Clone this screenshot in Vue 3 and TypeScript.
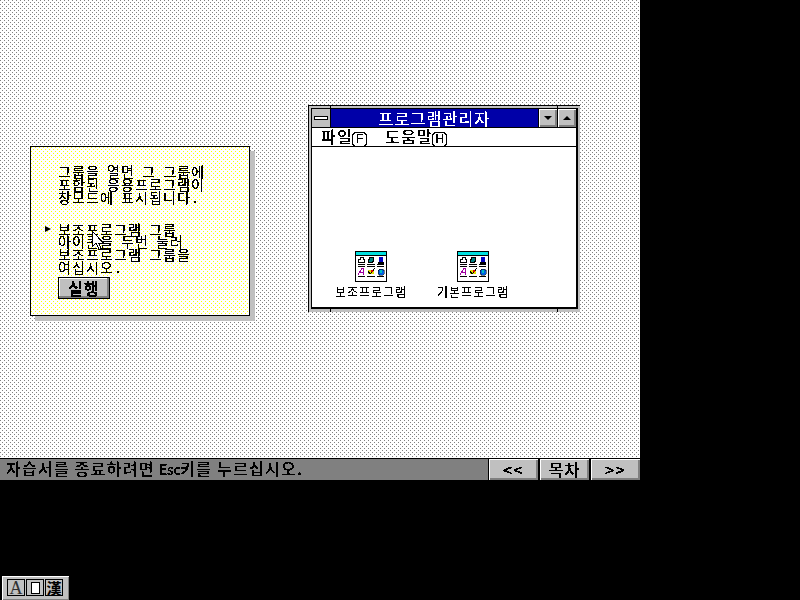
<script setup lang="ts">
const noteTop = ['그룹을 열면 그 그룹에', '포함된 응용프로그램이', '창모드에 표시됩니다 .']
const noteSteps = ['보조프로그램 그룹', '아이콘을 두번 눌러', '보조프로그램 그룹을', '여십시오 .']
const groups = ['보조프로그램', '기본프로그램']
const tickSpots = ['t1', 't2', 'b1', 'b2']

// the closing " ." sits tighter than a normal word gap
const body = (line: string) => line.replace(/ \.$/, '')
const hasDot = (line: string) => line.endsWith(' .')
</script>

<template>
  <div class="screen">
    <svg class="defs" width="0" height="0">
      <filter id="crisp" color-interpolation-filters="sRGB" x="0" y="0" width="100%" height="100%">
        <feComponentTransfer>
          <feFuncA type="discrete" tableValues="0 1 1" />
        </feComponentTransfer>
      </filter>
    </svg>

    <div class="desktop">
      <section class="note">
        <div class="note-text">
          <p v-for="line in noteTop" :key="line" class="txt">{{ body(line) }}<span v-if="hasDot(line)" class="dot"> .</span></p>
          <p class="blank">&nbsp;</p>
          <p v-for="(line, i) in noteSteps" :key="line" class="step">
            <i v-if="i === 0" class="bullet"></i><span class="txt">{{ body(line) }}<span v-if="hasDot(line)" class="dot"> .</span></span>
          </p>
          <button class="run"><span class="txt">실행</span></button>
        </div>
        <svg class="cursor" width="13" height="20" viewBox="0 0 13 20" shape-rendering="crispEdges">
          <path d="M.5.5v15l3.500-3.500 3 6.500h2.500l-3-6.500h5z" fill="#fff" stroke="#000" />
        </svg>
      </section>

      <section class="window">
        <i v-for="t in tickSpots" :key="t" class="tick" :class="t"></i>
        <header class="titlebar">
          <div class="sysmenu"><span></span></div>
          <div class="title"><span class="txt">프로그램관리자</span></div>
          <div class="winbtn"><i class="down"></i></div>
          <div class="winbtn"><i class="up"></i></div>
        </header>
        <nav class="menu">
          <span class="txt">파일<b>F</b></span>
          <span class="txt">도움말<b>H</b></span>
        </nav>
        <div class="client">
          <div v-for="g in groups" :key="g" class="group">
            <svg width="32" height="31" viewBox="0 0 32 31" shape-rendering="crispEdges">
              <rect x=".5" y=".5" width="31" height="30" fill="#fff" stroke="#000" />
              <rect x="1" y="1" width="30" height="3" fill="#00e0e0" />
              <path d="M1 4.500h30" stroke="#000" />
              <!-- top row: three little machines on their bars -->
              <path d="M5.500 6.500h3v2h1v3h-6v-3h2z" fill="#fff" stroke="#000" />
              <path d="M14.500 6.500h4v4h-1v1h-4v-3h1z" fill="#008080" stroke="#000" />
              <rect x="24" y="6" width="4" height="5" fill="#0000c0" />
              <path d="M23 11h6v2h-6z" fill="#000" />
              <path d="M3 13h7v1H3zM3 15h7v1H3zM12 13h8v1h-8zM12 15h8v1h-8zM22 13h7v1h-7zM22 15h7v1h-7z" fill="#000" />
              <!-- bottom row: letter, palette, dial -->
              <path d="M3 24l4-7h1l1 7M5 21h4" fill="none" stroke="#a000a0" />
              <path d="M13 19h6v4h-6z" fill="#e0e000" />
              <path d="M13 20l2 3 5-6" fill="none" stroke="#000" />
              <path d="M16 19h2v2h-2z" fill="#e00000" />
              <path d="M24 18h4v1h1v4h-1v1h-4v-1h-1v-4h1z" fill="#0060e0" stroke="#000" stroke-width=".5" />
              <path d="M25 19h2v3h-2z" fill="#00c0c0" />
              <path d="M3 25h7v1H3zM12 25h8v1h-8zM22 25h7v1h-7z" fill="#000" />
            </svg>
            <span class="txt">{{ g }}</span>
          </div>
        </div>
      </section>
    </div>

    <footer class="status">
      <span class="hint txt">자습서를 종료하려면 <em>Esc</em><span class="tight">키를 누르십시오.</span></span>
      <div class="navs">
        <button><span class="txt">&lt;&lt;</span></button>
        <button><span class="txt">목차</span></button>
        <button><span class="txt">&gt;&gt;</span></button>
      </div>
    </footer>

    <div class="tray">
      <span class="tray-a">A</span>
      <span class="tray-box"><i></i></span>
      <span class="tray-han">漢</span>
    </div>
  </div>
</template>

<style>
html, body { margin: 0; background: #000; }
</style>

<style scoped>
.screen {
  position: relative;
  width: 800px;
  height: 600px;
  background: #000;
  font-family: "Noto Sans CJK KR", "Liberation Sans", sans-serif;
  color: #000;
  overflow: hidden;
}
.defs { position: absolute; }
.txt { display: inline-block; filter: url(#crisp); }
p.txt { display: block; }
.desktop {
  position: relative;
  width: 640px;
  height: 458px;
  background: #fff url("data:image/svg+xml,%3Csvg xmlns='http://www.w3.org/2000/svg' width='4' height='4' shape-rendering='crispEdges'%3E%3Cpath d='M0 0h1v1H0zM2 2h1v1H2z' fill='%23808080'/%3E%3C/svg%3E");
}
p { margin: 0; }

.note {
  position: absolute;
  left: 30px;
  top: 146px;
  width: 220px;
  height: 170px;
  box-sizing: border-box;
  border: 1px solid #000;
  background: #fff url("data:image/svg+xml,%3Csvg xmlns='http://www.w3.org/2000/svg' width='4' height='4' shape-rendering='crispEdges'%3E%3Cpath d='M0 0h1v1H0zM2 2h1v1H2z' fill='%23ffff00'/%3E%3C/svg%3E");
  box-shadow: 5px 5px 0 #c0c0c0;
}
.note-text {
  padding: 18px 0 0 27px;
  font-size: 14px;
  line-height: 12.75px;
  letter-spacing: 1.12px;
  word-spacing: 2.8px;
  white-space: nowrap;
}
.dot { word-spacing: 0; margin-left: -2px; }
.blank { height: 19.25px; }
.step { position: relative; }
.bullet {
  position: absolute;
  left: -13px;
  top: 3px;
  border-left: 6px solid #000;
  border-top: 3px solid transparent;
  border-bottom: 3px solid transparent;
}
.run {
  display: block;
  width: 52px;
  height: 22px;
  margin-top: 3px;
  padding: 0;
  background: #c0c0c0;
  border: 1px solid #000;
  box-shadow: inset -2px -2px 0 #808080, inset 1px 1px 0 #fff;
  font: 700 16px/18px "Noto Sans CJK KR", sans-serif;
  letter-spacing: 1.3px;
  color: #000;
}
.cursor { position: absolute; left: 61px; top: 84px; }

.window {
  position: absolute;
  left: 308px;
  top: 105px;
  width: 272px;
  height: 207px;
  box-sizing: border-box;
  border-left: 1px solid #000;
  border-top: 1px solid #000;
  background: #c0c0c0;
  padding: 2px 2px 3px;
  display: flex;
  flex-direction: column;
}
.tick { position: absolute; width: 1px; height: 3px; background: #000; }
.t1 { left: 21px; top: 0; }
.t2 { left: 248px; top: 0; }
.b1 { left: 21px; bottom: 0; }
.b2 { left: 248px; bottom: 0; }
.titlebar {
  display: flex;
  height: 19px;
  flex: none;
  border-left: 1px solid #000;
  border-top: 1px solid #000;
  border-right: 2px solid #000;
  box-sizing: border-box;
}
.sysmenu {
  width: 18px;
  background: #c0c0c0;
  border-right: 1px solid #000;
  display: flex;
  align-items: center;
  justify-content: center;
}
.sysmenu span {
  width: 12px;
  height: 2px;
  background: #fff;
  border: 1px solid #000;
}
.title {
  flex: 1;
  background: #0000a8;
  color: #fff;
  text-align: center;
  font-size: 16px;
  line-height: 18px;
  letter-spacing: 1.28px;
}
.winbtn {
  width: 18px;
  border-left: 1px solid #000;
  background: #c0c0c0;
  box-shadow: inset 1px 1px 0 #fff, inset -2px -2px 0 #808080;
  display: flex;
  align-items: center;
  justify-content: center;
}
.winbtn i {
  border-left: 4px solid transparent;
  border-right: 4px solid transparent;
}
.winbtn .down { border-top: 4px solid #000; }
.winbtn .up { border-bottom: 4px solid #000; }
.menu {
  flex: none;
  display: flex;
  gap: 18px;
  height: 20px;
  box-sizing: border-box;
  padding-left: 9px;
  background: #fff;
  border-left: 1px solid #000;
  border-right: 2px solid #000;
  border-top: 1px solid #000;
  border-bottom: 1px solid #000;
  font-size: 16px;
  line-height: 16px;
  font-weight: 500;
  letter-spacing: 1.28px;
}
.menu b {
  display: inline-block;
  width: 15px;
  margin-left: -1px;
  box-sizing: border-box;
  text-align: center;
  font: 400 12px/13px "Liberation Sans", sans-serif;
  border: 1px solid #000;
  border-radius: 4px;
  letter-spacing: 0;
  vertical-align: 0;
}
.client {
  flex: 1;
  background: #fff;
  border-left: 1px solid #000;
  border-right: 2px solid #000;
  border-bottom: 2px solid #000;
  display: flex;
  align-items: flex-end;
  padding: 0 0 8px 23px;
  gap: 30px;
}
.group {
  width: 72px;
  display: flex;
  flex-direction: column;
  align-items: center;
  gap: 3px;
  font-size: 12px;
  line-height: 14px;
  letter-spacing: .96px;
  white-space: nowrap;
}

.status {
  width: 640px;
  height: 22px;
  box-sizing: border-box;
  background: #808080;
  border-top: 1px solid #000;
  display: flex;
  justify-content: space-between;
}
.hint {
  padding-left: 6px;
  font-size: 16px;
  font-weight: 500;
  line-height: 19px;
  letter-spacing: 1.28px;
  word-spacing: -.5px;
  white-space: nowrap;
}
.hint em { font-style: normal; font-size: 14.5px; letter-spacing: -.6px; }
.tight { word-spacing: 0; }
.navs { display: flex; gap: 2px; background: #000; padding-left: 1px; height: 21px; }
.navs button {
  width: 49px;
  height: 21px;
  padding: 0;
  background: #c0c0c0;
  border: 0;
  box-shadow: inset 1px 1px 0 #fff, inset -2px -2px 0 #808080;
  font: 500 16px/19px "Noto Sans CJK KR", sans-serif;
  letter-spacing: 1.28px;
  color: #000;
}

.tray {
  position: absolute;
  left: 2px;
  top: 576px;
  width: 67px;
  height: 24px;
  box-sizing: border-box;
  background: #c0c0c0;
  box-shadow: inset 1px 1px 0 #fff, inset -1px -1px 0 #808080;
  padding: 3px 5px;
  display: flex;
  gap: 1px;
}
.tray span {
  width: 18px;
  height: 17px;
  display: flex;
  align-items: center;
  justify-content: center;
  border: 1px solid #000;
  box-sizing: border-box;
}
.tray-a { font: 400 18px/18px "Liberation Serif", serif; color: #303030; }
.tray-box i { width: 9px; height: 12px; background: #fff; border: 1px solid #000; box-sizing: border-box; }
.tray-han { font: 700 15px/18px "Noto Sans CJK KR", sans-serif; }
</style>
